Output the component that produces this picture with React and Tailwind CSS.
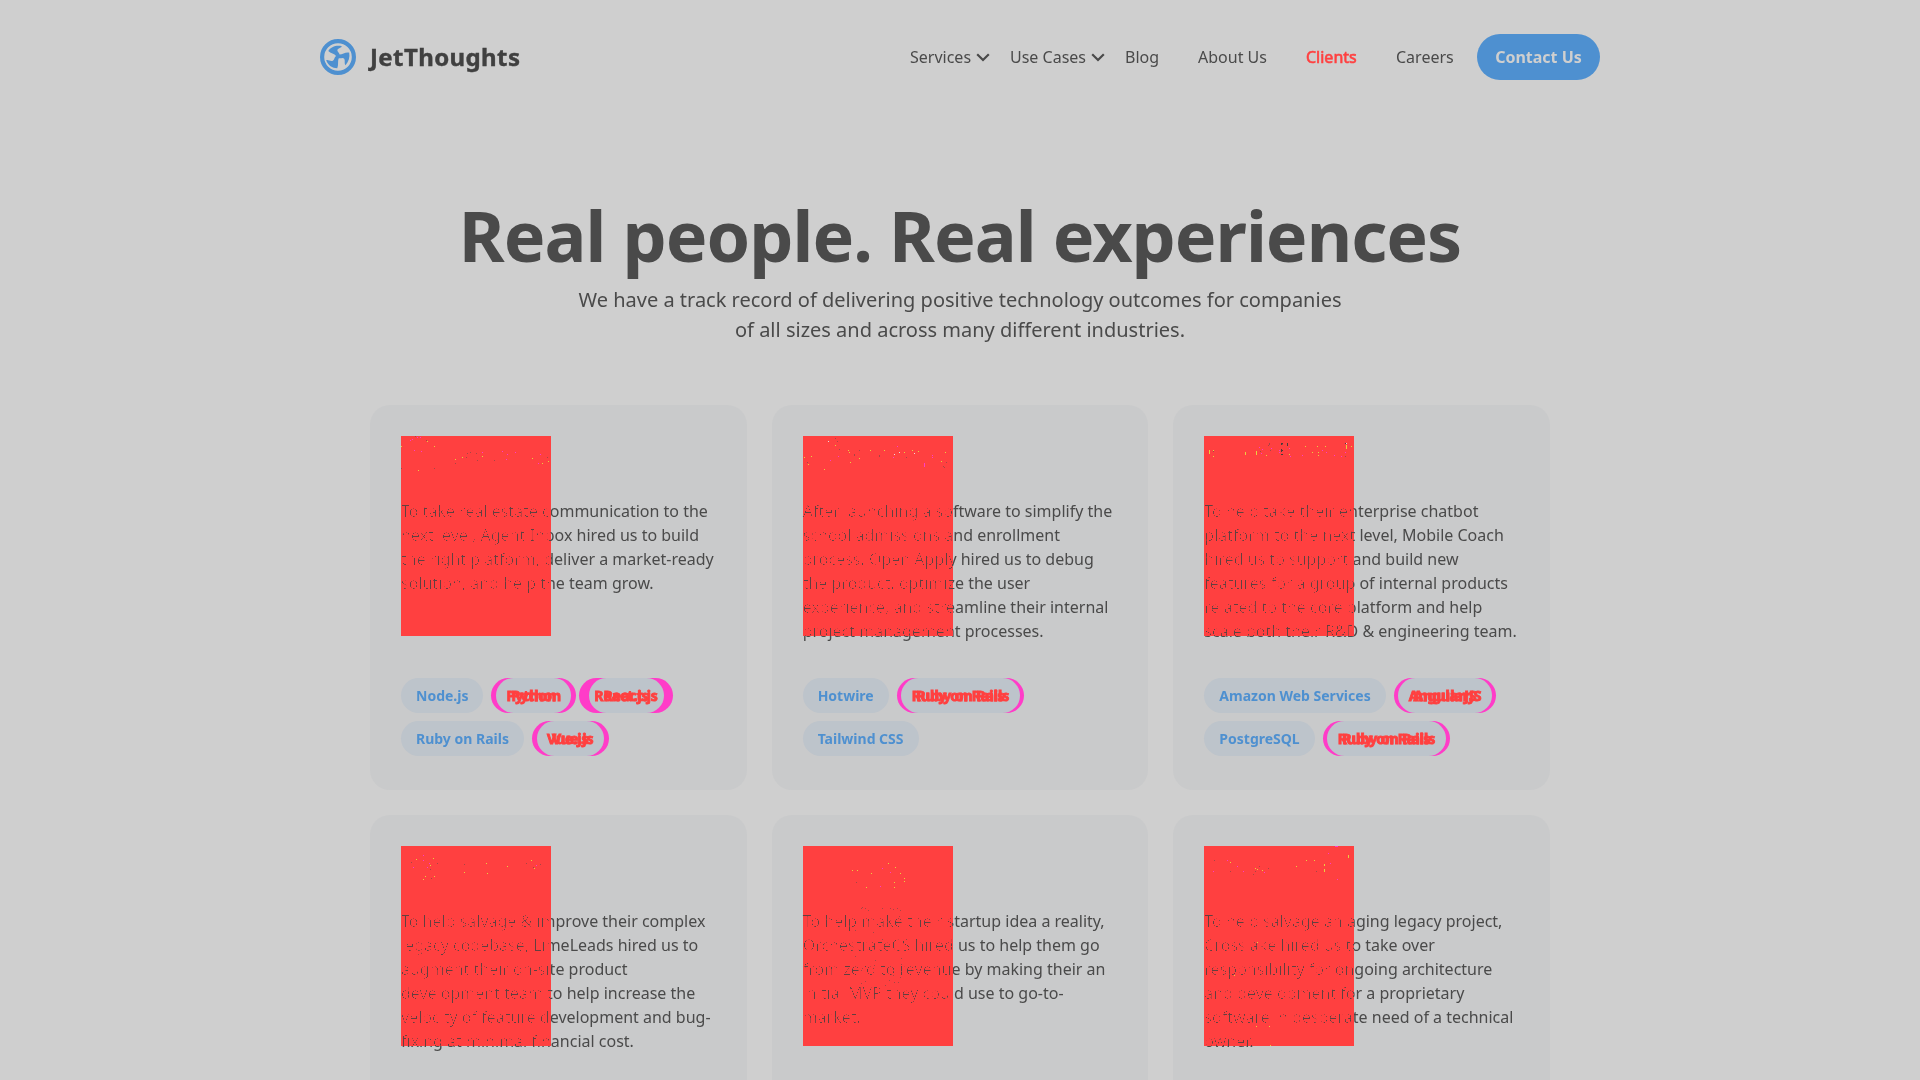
const cards = [
  {
    lines: ['To take real estate communication to the', 'next level, Agent Inbox hired us to build', 'the right platform, deliver a market-ready', 'solution, and help the team grow.'],
    rows: [[['Node.js'], ['Python', 5]], [['Ruby on Rails'], ['Vue.js', 5]]],
    extra: ['React.js', 9.3],
    specks: 'm9,4 m11,3 m16,1 m19,1 d14,0 y26,5 y0,10 y33,10 m13,14 m20,15 d25,4 d0,32 y17,34 d33,32 y54,23 d54,27 y61,21 d65,21 d66,17 d69,16 d75,17 d76,24 m81,16 y81,20 d93,24 m101,15 m106,18 m105,23 m114,16 y131,22 m139,18 m137,27 y141,27 d146,21 y147,25',
  },
  {
    lines: ['After launching a software to simplify the', 'school admissions and enrollment', 'process, Open Apply hired us to debug', 'the product, optimize the user', 'experience, and streamline their internal', 'project management processes.'],
    rows: [[['Hotwire'], ['Ruby on Rails', 4.6]], [['Tailwind CSS']]],
    specks: 'w25,5 d32,2 y32,9 d34,5 d36,13 y1,21 y8,20 d4,26 y5,28 y21,33 m27,24 m35,20 y45,14 y46,16 d51,18 d51,19 y56,22 y47,26 d56,14 y67,14 d76,19 d76,20 y81,14 w91,18 m90,21 w96,16 y101,16 d103,21 m94,10 y109,14 w111,17 y115,15 m121,27 m121,28 m121,29 m121,30 m129,19 m129,21 y138,25 y142,16 d143,26 d141,31 d140,30',
  },
  {
    lines: ['To help take their enterprise chatbot', 'platform to the next level, Mobile Coach', 'hired us to support and build new', 'features for a group of internal products', 'related to the core platform and help', 'scale both their R&D & engineering team.'],
    rows: [[['Amazon Web Services'], ['AngularJS', 4.8]], [['PostgreSQL'], ['Ruby on Rails', 4.6]]],
    specks: 'y5,14 y5,15 y5,16 y5,17 y9,14 d9,15 y9,20 y41,16 y41,17 y41,18 y52,15 y52,16 y52,17 y52,18 m55,11 d56,15 m58,13 m57,17 y62,19 d65,8 d65,7 d64,9 d66,14 m67,12 k77,7 k77,8 k78,7 d78,8 k77,13 k77,14 k78,14 k77,15 k77,18 k78,18 m75,14 m75,16 k83,7 k83,8 k83,9 y85,18 m85,12 m86,20 y101,10 m98,19 y108,16 y113,10 y114,19 m118,14 y121,10 m122,16 y114,16 m130,19 k141,7 w142,7 y142,9 y142,10 y142,11 y142,12 m141,16 m137,20 d141,20 y147,10',
  },
  {
    lines: ['To help salvage & improve their complex', 'legacy codebase, LimeLeads hired us to', 'augment their on-site product', 'development team to help increase the', 'velocity of feature development and bug-', 'fixing at minimal financial cost.'],
    rows: [],
    specks: 'd10,16 y15,13 m22,9 m22,14 m12,21 m28,17 y29,19 y32,12 d36,17 m26,21 d29,23 y24,30 y22,33 d30,32 y33,30 d63,18 y63,26 y85,17 y86,27 y106,20 d125,17 y130,14 m135,19 d132,21 y133,22 d139,18',
  },
  {
    lines: ['To help make their startup idea a reality,', 'OrchestrateCS hired us to help them go', 'from zero to revenue by making their an', 'initial MVP they could use to go-to-', 'market.'],
    rows: [],
    specks: 'y49,24 y54,24 d53,36 y68,27 m79,22 y85,17 y92,21 m87,26 y97,27 y101,32 y101,35 y91,36 y91,41 y63,41 m77,40 d58,62 d59,61 d62,62 d65,64 d79,62 d87,62 d90,63 d94,62 d97,64 d96,70 d70,86 d52,84 d79,93 d52,110 d58,124 d71,119 d72,114 d98,112 d98,118 d98,125 d90,129 d95,136 d97,131 d62,135 d58,137 d82,139 d86,134 d91,136',
  },
  {
    lines: ['To help salvage an aging legacy project,', 'Crosslake hired us to take over', 'responsibility for ongoing architecture', 'and development for a proprietary', 'software in desperate need of a technical', 'owner.'],
    rows: [],
    specks: 'm131,0 m132,0 m133,0 m124,7 y144,9 y144,10 y144,11 d10,14 m23,14 y26,16 m33,20 m9,25 d26,25 m39,25 y51,22 y53,23 y58,24 m60,26 d55,20 d64,22 d49,28 d51,25 y92,20 y102,14 y110,14 m126,17 y120,18 y120,19 y120,23 y120,24 y120,25 d112,25 m133,33 y53,96 y30,129 y52,180 y65,180 y66,199',
  },
];

const speckColors = { m: '#ff3cc8', y: '#e8d040', d: '#a84444', k: '#4a3a3a', w: '#f0dada' };

function Specks({ data }) {
  return (
    <svg className="absolute inset-0" width="150" height="200" shapeRendering="crispEdges" aria-hidden="true">
      {data.split(' ').map((s, i) => {
        const [x, y] = s.slice(1).split(',');
        return <rect key={i} x={x} y={y} width="1" height="1" fill={speckColors[s[0]]} />;
      })}
    </svg>
  );
}

function Tag({ label, shift }) {
  if (!shift) {
    return <span className="mr-2 h-[35px] rounded-full bg-[#bdc4cb] px-[15px] text-sm leading-[35px] font-bold text-[#4e90d0]">{label}</span>;
  }
  return (
    <span
      className="relative h-[35px] rounded-full bg-[#ff3cc8] pl-[15px] text-sm leading-[35px] font-bold text-[#ff4040] [-webkit-text-stroke:0.9px_#ff4040]"
      style={{ paddingRight: 15 + shift, marginRight: 8 - shift }}
    >
      <span className="absolute inset-y-0 rounded-full bg-[#bdc4cb]" style={{ left: shift, right: shift }} />
      <span className="relative">{label}</span>
      <span className="absolute top-0" style={{ left: 15 + shift }} aria-hidden="true">{label}</span>
    </span>
  );
}

function Card({ card }) {
  return (
    <article className="relative flex h-[385px] flex-col rounded-[20px] bg-[#c9cacb] px-[31px] pt-[94px]">
      <p className="h-[179px] text-base leading-6 whitespace-nowrap">
        {card.lines.map((l) => <span key={l} className="block">{l}</span>)}
      </p>
      <div className="flex flex-col gap-2">
        {card.rows.map((row, i) => (
          <div key={i} className="flex whitespace-nowrap">
            {row.map(([label, shift]) => <Tag key={label} label={label} shift={shift} />)}
            {i === 0 && card.extra && <Tag label={card.extra[0]} shift={card.extra[1]} />}
          </div>
        ))}
      </div>
      <div className="absolute top-[31px] left-[31px] h-[200px] w-[150px] backdrop-brightness-[1.68] backdrop-contrast-[9]" />
      <div className="absolute top-[31px] left-[31px] h-[200px] w-[150px] bg-[#ff4040] mix-blend-darken" />
      <div className="absolute top-[31px] left-[31px] h-[200px] w-[150px]"><Specks data={card.specks} /></div>
    </article>
  );
}

function Chevron() {
  return (
    <svg className="mt-px" width="14" height="9" viewBox="0 0 14 9" fill="none" stroke="#4a4a4a" strokeWidth="2.2">
      <path d="M1.2 1.2 7 7 12.8 1.2" />
    </svg>
  );
}

function Logo() {
  return (
    <div className="flex w-[590px] items-center">
      <svg width="36" height="36" viewBox="0 0 36 36">
        <circle cx="18" cy="18" r="15.9" fill="none" stroke="#4e90d0" strokeWidth="4.2" />
        <path fill="#4e90d0" d="M8.300 12C10.500 8.200 16 6 21.800 7.200C21.500 8.800 18.500 8.800 17.500 10.700C16.800 12.500 19.500 13.500 19.600 15.600C22.500 15.500 26 12.800 29.200 13.800C30 18 28.800 22.500 25.500 26.200C24 25 25.500 21.500 24 19.600C22.500 18.200 20.500 19.800 18.800 19.200C17.500 21.500 18.800 26 17.200 29.200C12.500 29.200 7.800 26.200 6.200 21.200C8 20.200 10.500 22.700 12.800 21.700C14.700 20.700 14 18.500 16 17C14.700 14.500 10.500 14.500 8.300 12Z" />
      </svg>
      <span className="ml-[14px] text-[24px] leading-9 font-bold tracking-[0.4px] text-[#404040] [-webkit-text-stroke:0.4px_#404040]">JetThoughts</span>
    </div>
  );
}

export default function App() {
  return (
    <div className="h-[1080px] overflow-hidden bg-[#cfcfcf] font-['Noto_Sans',sans-serif] text-[#4a4a4a]">
      <header className="mx-auto flex h-[114px] w-[1280px] items-center text-base whitespace-nowrap">
        <Logo />
        <nav className="flex flex-1 items-center">
          <a className="flex w-[100px] items-center gap-[5px]">Services <Chevron /></a>
          <a className="flex w-[115px] items-center gap-[5px]">Use Cases <Chevron /></a>
          <a className="w-[73px]">Blog</a>
          <a className="w-[108px]">About Us</a>
          <a className="w-[90px] text-[#ff4040] [-webkit-text-stroke:0.6px_#ff4040]">Clients</a>
          <a className="w-[81px]">Careers</a>
          <a className="flex h-[46px] w-[123px] items-center justify-center rounded-full bg-[#4e90d0] font-bold text-[#cfcfcf]">Contact Us</a>
        </nav>
      </header>
      <main>
        <section className="pt-[76px] text-center">
          <h1 className="text-[70px] leading-[90px] font-bold tracking-[-1px]">Real people. Real experiences</h1>
          <p className="mt-[5px] text-xl leading-[30px]">
            We have a track record of delivering positive technology outcomes for companies
            <br />
            of all sizes and across many different industries.
          </p>
        </section>
        <section className="mx-auto mt-[60px] grid w-[1180px] grid-cols-3 gap-[25px]">
          {cards.map((card) => <Card key={card.lines[0]} card={card} />)}
        </section>
      </main>
    </div>
  );
}
